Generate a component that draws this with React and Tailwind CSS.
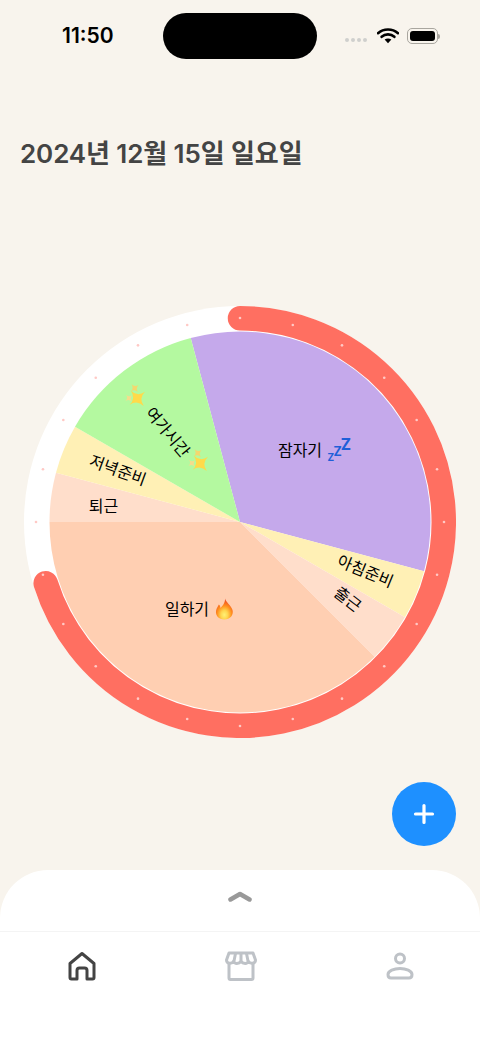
const KR = "font-['Inter','Noto_Sans_CJK_KR',sans-serif]";

// 24시간 원형 시간표: 1시간 = 15도, 위쪽이 0도
const slices = [
    { from: 345, to: 465, fill: "#C5A9EB" },
    { from: 105, to: 120, fill: "#FFF0B5" },
    { from: 120, to: 135, fill: "#FFDECB" },
    { from: 135, to: 270, fill: "#FFCFB2" },
    { from: 270, to: 285, fill: "#FFDECB" },
    { from: 285, to: 300, fill: "#FFF0B5" },
    { from: 300, to: 345, fill: "#B4F9A0" },
];

const labels = [
    { text: "잠자기", x: 60, y: -72, rotate: 0 },
    { text: "아침준비", x: 125.5, y: 49, rotate: 22.5 },
    { text: "출근", x: 108, y: 77, rotate: 37.5 },
    { text: "일하기", x: -53, y: 87, rotate: 0 },
    { text: "퇴근", x: -136.5, y: -16, rotate: 0 },
    { text: "저녁준비", x: -122, y: -52, rotate: 20 },
    { text: "여가시간", x: -72, y: -90, rotate: 50 },
];

function polar(r, deg) {
    const rad = ((deg - 90) * Math.PI) / 180;
    return [r * Math.cos(rad), r * Math.sin(rad)];
}

function slicePath(r, from, to) {
    const [x1, y1] = polar(r, from);
    const [x2, y2] = polar(r, to);
    return `M0 0L${x1} ${y1}A${r} ${r} 0 ${to - from > 180 ? 1 : 0} 1 ${x2} ${y2}Z`;
}

function arcPath(r, from, to) {
    const [x1, y1] = polar(r, from);
    const [x2, y2] = polar(r, to);
    return `M${x1} ${y1}A${r} ${r} 0 ${to - from > 180 ? 1 : 0} 1 ${x2} ${y2}`;
}

function Star({ x, y, r, fill }) {
    const k = r * 0.09;
    return (
        <path
            transform={`translate(${x} ${y}) rotate(50)`}
            d={`M0 ${-r}Q${k} ${-k} ${r} 0Q${k} ${k} 0 ${r}Q${-k} ${k} ${-r} 0Q${-k} ${-k} 0 ${-r}Z`}
            fill={fill}
        />
    );
}

function Sparkles({ x, y }) {
    return (
        <g>
            <Star x={x} y={y} r={10} fill="#FFDA4A" />
            <Star x={x - 2.6} y={y - 10.2} r={5} fill="#F4D76E" />
            <Star x={x - 8.4} y={y - 0.2} r={4.4} fill="#F4DD8C" />
        </g>
    );
}

function Fire({ x, y }) {
    return (
        <g transform={`translate(${x} ${y})`}>
            <defs>
                <radialGradient id="flame" cx="50%" cy="78%" r="70%">
                    <stop offset="0%" stopColor="#FFF176" />
                    <stop offset="30%" stopColor="#FFD54F" />
                    <stop offset="62%" stopColor="#FF8F1F" />
                    <stop offset="100%" stopColor="#EF4A23" />
                </radialGradient>
            </defs>
            <path
                d="M9.5 0C10.5 4 15.5 6.5 17 11.5C18.4 16.5 14.5 21 8.8 21C3.4 21 -0.4 17 0.6 12C1.1 9.4 2.6 7.8 3.4 6C4.4 7 4.9 8.2 5 9.4C7.4 7 9.8 4 9.5 0Z"
                fill="url(#flame)"
            />
        </g>
    );
}

function Wheel() {
    const dots = Array.from({ length: 24 }, (_, i) => polar(204, i * 15));

    return (
        <svg width="432" height="432" viewBox="-216 -216 432 432" className="block">
            <circle r="216" fill="#FFFFFF" />
            {slices.map((s) => (
                <path key={s.from} d={slicePath(190.5, s.from, s.to)} fill={s.fill} />
            ))}
            <path
                d={arcPath(203.75, 0, 252.5)}
                fill="none"
                stroke="#FF6F61"
                strokeWidth="24.5"
                strokeLinecap="round"
            />
            {dots.map(([x, y], i) => (
                <circle key={i} cx={x} cy={y} r="1.3" fill="#FFC9C5" />
            ))}
            {labels.map((l) => (
                <text
                    key={l.text}
                    transform={`translate(${l.x} ${l.y}) rotate(${l.rotate})`}
                    textAnchor="middle"
                    dominantBaseline="central"
                    className={`${KR} text-[16px] fill-black`}
                >
                    {l.text}
                </text>
            ))}
            {/* 이모지 */}
            <g className="font-['Inter',sans-serif] font-bold fill-[#1F5FD8]">
                <text x="87.6" y="-61" className="text-[10px]">Z</text>
                <text x="93.4" y="-66.3" className="text-[12.5px]">Z</text>
                <text x="100.8" y="-72" className="text-[15.5px]">Z</text>
            </g>
            <Fire x={-24.5} y={76.5} />
            <Sparkles x={-102.7} y={-123.7} />
            <Sparkles x={-39.7} y={-58.7} />
        </svg>
    );
}

function StatusBar() {
    return (
        <div className="flex items-center mt-[13px] pl-[62px] h-[46px]">
            <div className="w-[101px] text-[21px] leading-[24px] font-semibold text-black font-['Inter',sans-serif]">11:50</div>
            <div className="w-[154px] h-[46px] rounded-full bg-black" />
            <div className="flex items-center ml-[28px]">
                <div className="flex gap-[2px] mt-[7px] w-[32px]">
                    <span className="w-[4px] h-[4px] rounded-full bg-[#CFCFCD]" />
                    <span className="w-[4px] h-[4px] rounded-full bg-[#CFCFCD]" />
                    <span className="w-[4px] h-[4px] rounded-full bg-[#CFCFCD]" />
                    <span className="w-[4px] h-[4px] rounded-full bg-[#CFCFCD]" />
                </div>
                <svg width="22" height="16" viewBox="0 0 22 16" className="block">
                    <path d="M1 5.2C6.6 0.2 15.4 0.2 21 5.2" fill="none" stroke="#000" strokeWidth="2.6" strokeLinecap="round" />
                    <path d="M4.6 8.8C8.2 5.6 13.8 5.6 17.4 8.8" fill="none" stroke="#000" strokeWidth="2.6" strokeLinecap="round" />
                    <path d="M7.6 11.6L11 15.2L14.4 11.6C12.4 10 9.6 10 7.6 11.6Z" fill="#000" />
                </svg>
                <div className="flex items-center ml-[8px]">
                    <div className="w-[31px] h-[16px] rounded-[5px] border border-[#A9A69F] p-[2px]">
                        <div className="w-full h-full rounded-[3px] bg-black" />
                    </div>
                    <div className="w-[2px] h-[5px] rounded-r-full bg-[#A9A69F]" />
                </div>
            </div>
        </div>
    );
}

function BottomSheet() {
    return (
        <div className="mt-[24px] bg-white rounded-t-[48px] flex-1 flex flex-col">
            <div className="h-[61px] flex justify-center pt-[20px]">
                <svg width="24" height="12" viewBox="0 0 24 12" className="block">
                    <path d="M2.5 9.5L12 4L21.5 9.5" fill="none" stroke="#999999" strokeWidth="4.5" strokeLinecap="round" strokeLinejoin="round" />
                </svg>
            </div>
            <div className="border-t border-[#F4F4F4] grid grid-cols-3 pt-[19px] pl-[2px]">
                <div className="flex justify-center">
                    <svg width="28" height="30" viewBox="0 0 28 30" fill="none" stroke="#444444" strokeWidth="3" strokeLinejoin="round">
                        <path d="M2 12.5L14 2.5L26 12.5V26.5C26 27.5 25.5 28 24.5 28H19V19.5C19 18 18 17 16.5 17H11.5C10 17 9 18 9 19.5V28H3.5C2.5 28 2 27.5 2 26.5Z" />
                    </svg>
                </div>
                <div className="flex justify-center">
                    <svg width="32" height="30" viewBox="0 0 32 30" fill="none" stroke="#BEC2C7" strokeWidth="3" strokeLinejoin="round" strokeLinecap="round">
                        <path d="M4 2H28L30.5 9C30.5 13 25 13 23.5 10.5C22.5 13 18 13 16 10.5C14 13 9.5 13 8.5 10.5C7 13 1.5 13 1.5 9Z" />
                        <path d="M10.5 2.5L9 10M16 2.5V10M21.5 2.5L23 10" />
                        <path d="M4 13V27C4 28 4.5 28.5 5.5 28.5H26.5C27.5 28.5 28 28 28 27V13" />
                    </svg>
                </div>
                <div className="flex justify-center">
                    <svg width="28" height="30" viewBox="0 0 28 30" fill="none" stroke="#BEC2C7" strokeWidth="3">
                        <circle cx="14" cy="7.5" r="4.5" />
                        <path d="M2 23.5C2 20 8 17.5 14 17.5C20 17.5 26 20 26 23.5C26 26 25 27 23 27H5C3 27 2 26 2 23.5Z" />
                    </svg>
                </div>
            </div>
        </div>
    );
}

export default function App() {
    return (
        <div className={`w-[480px] h-[1041px] bg-[#F8F4ED] flex flex-col overflow-hidden ${KR}`}>
            <StatusBar />
            <h1 className="mt-[79px] pl-[20px] text-[26px] tracking-[-0.1px] leading-[32px] font-semibold text-[#444444]">
                2024년 12월 15일 일요일
            </h1>
            <div className="mt-[136px] flex justify-center">
                <Wheel />
            </div>
            <div className="mt-[44px] flex justify-end pr-[24px]">
                <button className="w-[64px] h-[64px] rounded-full bg-[#1E90FF] flex items-center justify-center">
                    <svg width="24" height="24" viewBox="0 0 24 24" fill="none" stroke="#FFFFFF" strokeWidth="3.2" strokeLinecap="round">
                        <path d="M12 3.5V20.5M3.5 12H20.5" />
                    </svg>
                </button>
            </div>
            <BottomSheet />
        </div>
    );
}
